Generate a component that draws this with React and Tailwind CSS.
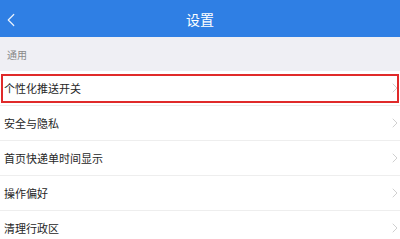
import { ChevronLeft, ChevronRight } from 'lucide-react'

const items = ['个性化推送开关', '安全与隐私', '首页快递单时间显示', '操作偏好', '清理行政区']

function App() {
  return (
    <div className="w-[400px] h-[239px] overflow-hidden bg-white font-['Noto_Sans_CJK_SC',sans-serif]">
      {/* Header */}
      <div className="h-[37px] bg-[#2f7fe4] flex items-center relative">
        <ChevronLeft className="absolute left-0 top-[9px] text-white/90" size={22} strokeWidth={1.3} />
        <div className="flex-1 text-center text-white text-[14px] leading-none">设置</div>
      </div>

      {/* Section label */}
      <div className="h-[34px] bg-[#efeff4] flex items-center pl-[7px] text-[10px] text-[#888]">通用</div>

      {/* Rows */}
      <div className="flex flex-col">
        {items.map((label, i) => (
          <div key={label} className="h-[35px] relative flex items-center border-b border-[#eeeeee]">
            <span className="pl-[4px] text-[11px] text-[#262626]">{label}</span>
            <ChevronRight className="ml-auto mr-[-3px] text-[#cccccc]" size={16} strokeWidth={1.4} />
            {i === 0 && (
              <div className="absolute left-[1px] right-[1px] top-[3px] bottom-[2px] border-2 border-[#e02a2a]" />
            )}
          </div>
        ))}
      </div>
    </div>
  )
}

export default App
